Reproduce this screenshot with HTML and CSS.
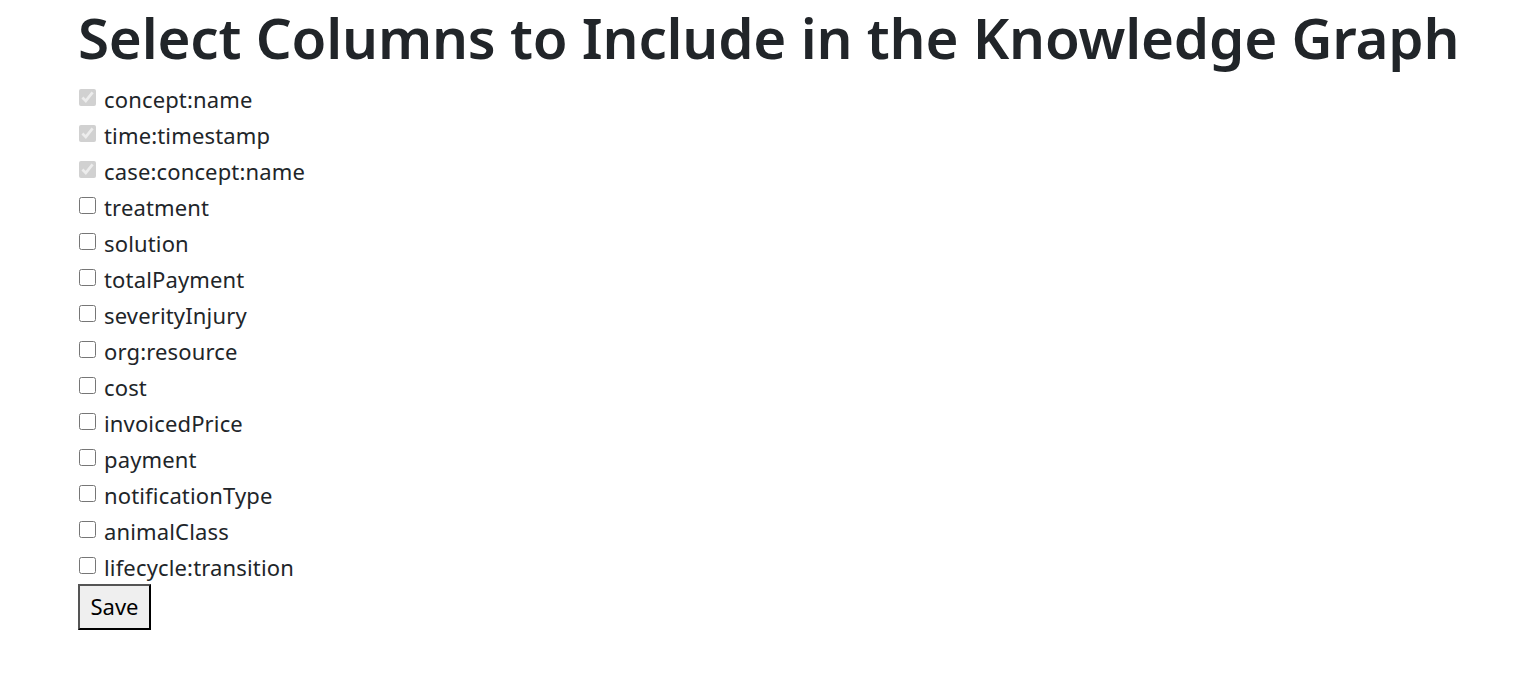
FILE: index.html
```html
<!DOCTYPE html>
<html>
<head>
<meta charset="utf-8">
<link rel="stylesheet" href="styles.css">
</head>
<body>
<main class="page">
  <h1 class="title">Select Columns to Include in the Knowledge Graph</h1>
  <form class="columns">
    <label class="row"><input type="checkbox" checked disabled><span>concept:name</span></label>
    <label class="row"><input type="checkbox" checked disabled><span>time:timestamp</span></label>
    <label class="row"><input type="checkbox" checked disabled><span>case:concept:name</span></label>
    <label class="row"><input type="checkbox"><span>treatment</span></label>
    <label class="row"><input type="checkbox"><span>solution</span></label>
    <label class="row"><input type="checkbox"><span>totalPayment</span></label>
    <label class="row"><input type="checkbox"><span>severityInjury</span></label>
    <label class="row"><input type="checkbox"><span>org:resource</span></label>
    <label class="row"><input type="checkbox"><span>cost</span></label>
    <label class="row"><input type="checkbox"><span>invoicedPrice</span></label>
    <label class="row"><input type="checkbox"><span>payment</span></label>
    <label class="row"><input type="checkbox"><span>notificationType</span></label>
    <label class="row"><input type="checkbox"><span>animalClass</span></label>
    <label class="row"><input type="checkbox"><span>lifecycle:transition</span></label>
    <button type="button" class="save">Save</button>
  </form>
</main>
</body>
</html>
```
FILE: styles.css
```css
html, body {
  margin: 0;
  padding: 0;
  background: #fff;
}
body {
  font-family: "Noto Sans", "Open Sans", sans-serif;
  color: #212529;
}
.page {
  padding: 0 0 0 78px;
}
.title {
  margin: 0;
  height: 82px;
  font-size: 56.5px;
  line-height: 76px;
  font-weight: 600;
  letter-spacing: -0.2px;
  color: #212529;
  white-space: nowrap;
}
.columns {
  display: flex;
  flex-direction: column;
  align-items: flex-start;
}
.row {
  display: flex;
  align-items: center;
  height: 36px;
  font-size: 22px;
  letter-spacing: 0.15px;
}
.row span {
  position: relative;
  top: -1px;
}
.row input {
  width: 17px;
  height: 17px;
  margin: 0 8px 0 1px;
  position: relative;
  top: -3px;
}
.save {
  margin-top: -2px;
  width: 73px;
  height: 46px;
  font-family: inherit;
  font-size: 22px;
  color: #000;
  background: #efefef;
  border: 2px solid;
  border-color: #555 #000 #000 #555;
  padding: 0 0 2px 0;
}
```
